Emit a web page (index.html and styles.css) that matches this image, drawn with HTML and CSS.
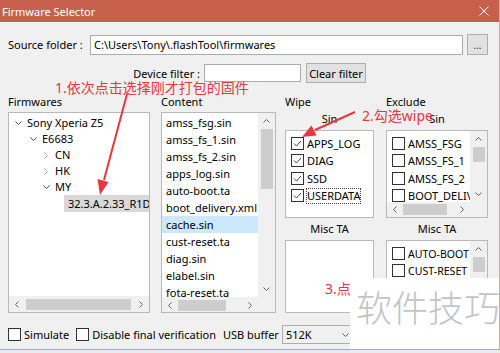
FILE: index.html
```html
<!DOCTYPE html>
<html lang="en">
<head>
  <meta charset="UTF-8" />
  <title>Firmware Selector</title>
  <link rel="stylesheet" href="styles.css">
</head>
<body>

<div class="window">
  <div class="titlebar">
    <span class="title">Firmware Selector</span>
    <svg class="close" width="10" height="10" viewBox="0 0 10 10"><path d="M0.5 0.5 L9.5 9.5 M9.5 0.5 L0.5 9.5" stroke="#fff" stroke-width="1"/></svg>
  </div>

  <div class="main">
    <div class="source-row">
      <label class="source-label">Source folder :</label>
      <div class="field source-field">C:\Users\Tony\.flashTool\firmwares</div>
      <button class="btn btn-dots">...</button>
    </div>

    <div class="filter-row">
      <label class="filter-label">Device filter :</label>
      <div class="field filter-field"></div>
      <button class="btn btn-clear">Clear filter</button>
    </div>

    <div class="panels">
      <!-- Firmwares tree -->
      <div class="col col-fw">
        <div class="cap">Firmwares</div>
        <div class="box box-tall">
          <div class="tree">
            <div class="node lvl0"><span class="chev open"><svg width="7" height="4"><polyline points="0.5,0.5 3.5,3.5 6.5,0.5" fill="none" stroke="#555"/></svg></span>Sony Xperia Z5</div>
            <div class="node lvl1"><span class="chev open"><svg width="7" height="4"><polyline points="0.5,0.5 3.5,3.5 6.5,0.5" fill="none" stroke="#555"/></svg></span>E6683</div>
            <div class="node lvl2"><span class="chev"><svg width="4" height="7"><polyline points="0.5,0.5 3.5,3.5 0.5,6.5" fill="none" stroke="#aaa"/></svg></span>CN</div>
            <div class="node lvl2"><span class="chev"><svg width="4" height="7"><polyline points="0.5,0.5 3.5,3.5 0.5,6.5" fill="none" stroke="#aaa"/></svg></span>HK</div>
            <div class="node lvl2"><span class="chev open"><svg width="7" height="4"><polyline points="0.5,0.5 3.5,3.5 6.5,0.5" fill="none" stroke="#555"/></svg></span>MY</div>
            <div class="node lvl3"><span class="leaf">32.3.A.2.33_R1D</span></div>
          </div>
          <div class="hscroll">
            <span class="arr"><svg width="4" height="7"><polyline points="3.5,0.5 0.5,3.5 3.5,6.5" fill="none" stroke="#606060"/></svg></span>
            <span class="track"><span class="thumb thumb-fw"></span></span>
            <span class="arr"><svg width="4" height="7"><polyline points="0.5,0.5 3.5,3.5 0.5,6.5" fill="none" stroke="#606060"/></svg></span>
          </div>
        </div>
      </div>

      <!-- Content list -->
      <div class="col col-content">
        <div class="cap">Content</div>
        <div class="box box-tall box-grid">
          <div class="list">
            <div class="item">amss_fsg.sin</div>
            <div class="item">amss_fs_1.sin</div>
            <div class="item">amss_fs_2.sin</div>
            <div class="item">apps_log.sin</div>
            <div class="item">auto-boot.ta</div>
            <div class="item">boot_delivery.xml</div>
            <div class="item selected">cache.sin</div>
            <div class="item">cust-reset.ta</div>
            <div class="item">diag.sin</div>
            <div class="item">elabel.sin</div>
            <div class="item">fota-reset.ta</div>
          </div>
          <div class="vscroll">
            <span class="arr"><svg width="7" height="4"><polyline points="0.5,3.5 3.5,0.5 6.5,3.5" fill="none" stroke="#606060"/></svg></span>
            <span class="track"><span class="thumb thumb-content"></span></span>
            <span class="arr"><svg width="7" height="4"><polyline points="0.5,0.5 3.5,3.5 6.5,0.5" fill="none" stroke="#606060"/></svg></span>
          </div>
          <div class="hscroll">
            <span class="arr"><svg width="4" height="7"><polyline points="3.5,0.5 0.5,3.5 3.5,6.5" fill="none" stroke="#606060"/></svg></span>
            <span class="track"><span class="thumb thumb-content-h"></span></span>
            <span class="arr"><svg width="4" height="7"><polyline points="0.5,0.5 3.5,3.5 0.5,6.5" fill="none" stroke="#606060"/></svg></span>
          </div>
          <div class="corner"></div>
        </div>
      </div>

      <!-- Wipe -->
      <div class="col col-wipe">
        <div class="cap">Wipe</div>
        <div class="sub">Sin</div>
        <div class="box box-sin">
          <div class="checks">
            <div class="check"><span class="cb"><svg width="11" height="11"><polyline points="2,5.5 4.5,8 9,3" fill="none" stroke="#444"/></svg></span>APPS_LOG</div>
            <div class="check"><span class="cb"><svg width="11" height="11"><polyline points="2,5.5 4.5,8 9,3" fill="none" stroke="#444"/></svg></span>DIAG</div>
            <div class="check"><span class="cb"><svg width="11" height="11"><polyline points="2,5.5 4.5,8 9,3" fill="none" stroke="#444"/></svg></span>SSD</div>
            <div class="check"><span class="cb"><svg width="11" height="11"><polyline points="2,5.5 4.5,8 9,3" fill="none" stroke="#444"/></svg></span><span class="focus">USERDATA</span></div>
          </div>
        </div>
        <div class="sub sub-misc">Misc TA</div>
        <div class="box box-misc"></div>
      </div>

      <!-- Exclude -->
      <div class="col col-exclude">
        <div class="cap">Exclude</div>
        <div class="sub">Sin</div>
        <div class="box box-sin box-grid">
          <div class="checks">
            <div class="check"><span class="cb"></span>AMSS_FSG</div>
            <div class="check"><span class="cb"></span>AMSS_FS_1</div>
            <div class="check"><span class="cb"></span>AMSS_FS_2</div>
            <div class="check"><span class="cb"></span>BOOT_DELIVERY</div>
          </div>
          <div class="vscroll">
            <span class="arr"><svg width="7" height="4"><polyline points="0.5,3.5 3.5,0.5 6.5,3.5" fill="none" stroke="#606060"/></svg></span>
            <span class="track"><span class="thumb thumb-ex"></span></span>
            <span class="arr"><svg width="7" height="4"><polyline points="0.5,0.5 3.5,3.5 6.5,0.5" fill="none" stroke="#606060"/></svg></span>
          </div>
          <div class="hscroll">
            <span class="arr"><svg width="4" height="7"><polyline points="3.5,0.5 0.5,3.5 3.5,6.5" fill="none" stroke="#606060"/></svg></span>
            <span class="track"><span class="thumb thumb-ex-h"></span></span>
            <span class="arr"><svg width="4" height="7"><polyline points="0.5,0.5 3.5,3.5 0.5,6.5" fill="none" stroke="#606060"/></svg></span>
          </div>
          <div class="corner"></div>
        </div>
        <div class="sub sub-misc">Misc TA</div>
        <div class="box box-misc box-grid">
          <div class="checks">
            <div class="check"><span class="cb"></span>AUTO-BOOT</div>
            <div class="check"><span class="cb"></span>CUST-RESET</div>
            <div class="check"><span class="cb"></span>DEVICE-KEY</div>
          </div>
          <div class="vscroll">
            <span class="arr"><svg width="7" height="4"><polyline points="0.5,3.5 3.5,0.5 6.5,3.5" fill="none" stroke="#606060"/></svg></span>
            <span class="track"><span class="thumb thumb-misc"></span></span>
            <span class="arr"><svg width="7" height="4"><polyline points="0.5,0.5 3.5,3.5 6.5,0.5" fill="none" stroke="#606060"/></svg></span>
          </div>
        </div>
      </div>
    </div>

    <div class="bottom-row">
      <label class="opt"><span class="cb"></span>Simulate</label>
      <label class="opt"><span class="cb"></span>Disable final verification</label>
      <span class="usb-label">USB buffer</span>
      <div class="select">512K<svg width="7" height="4"><polyline points="0.5,0.5 3.5,3.5 6.5,0.5" fill="none" stroke="#606060"/></svg></div>
    </div>
  </div>

  <!-- red annotations drawn over the dialog -->
  <div class="note note-1">1.依次点击选择刚才打包的固件</div>
  <div class="note note-2">2.勾选wipe</div>
  <div class="note note-3">3.点击flash</div>
  <svg class="arrows" width="500" height="353" viewBox="0 0 500 353">
    <line x1="127" y1="94" x2="104" y2="180" stroke="#e8383d" stroke-width="2"/>
    <polygon points="100,195 97.5,179 108.5,182" fill="#e8383d"/>
    <line x1="355" y1="112" x2="315" y2="130" stroke="#e8383d" stroke-width="2"/>
    <polygon points="302,137 311.5,125.5 316.5,135.5" fill="#e8383d"/>
  </svg>

  <div class="watermark">软件技巧</div>
</div>

</body>
</html>
```

FILE: styles.css
```css
body { margin: 0; background: #ebebeb; font-family: "Noto Sans", "Noto Sans CJK SC", sans-serif; font-size: 11px; color: #000; }

.window {
  position: relative;
  width: 500px; height: 350px;
  background: #f0f0f0;
  border-right: 1px solid #dca49a;
  border-bottom: 1px solid #d99a90;
  box-sizing: border-box;
  overflow: hidden;
}
.titlebar {
  height: 22px; background: #c8604e; color: #fff;
  display: flex; align-items: center; justify-content: space-between;
  padding: 0 10px 0 2px;
}
.title { font-size: 11px; }

.main { padding: 12px 11px 0 8px; }

.field {
  background: #fff; border: 1px solid #acacac; box-sizing: border-box;
  line-height: 18px; padding-left: 3px; white-space: nowrap; overflow: hidden;
}
.btn {
  font: inherit; background: #e1e1e1; border: 1px solid #adadad;
  padding: 0; color: #000; box-sizing: border-box; white-space: nowrap;
}

.source-row { display: flex; align-items: center; height: 21px; }
.source-label { width: 82px; }
.source-field { flex: 1; height: 20px; }
.btn-dots { width: 21px; height: 21px; margin-left: 4px; line-height: 14px; font-size: 10px; color: #333; }

.filter-row { display: flex; align-items: center; height: 20px; margin-top: 8px; }
.filter-label { width: 192px; text-align: right; padding-right: 4px; }
.filter-field { width: 97px; height: 18px; }
.btn-clear { width: 60px; height: 20px; margin-left: 5px; }

.panels { display: flex; margin-top: 11px; }
.col { display: flex; flex-direction: column; }
.col-fw { width: 142px; }
.col-content { width: 115px; margin-left: 11px; }
.col-wipe { width: 89px; margin-left: 9px; }
.col-exclude { width: 102px; margin-left: 12px; }

.cap { height: 18px; line-height: 15px; }
.sub { height: 18px; line-height: 14px; text-align: center; margin-top: -2px; padding-top: 2px; }
.sub-misc { height: 22px; line-height: 22px; margin-top: 0; padding-top: 0; }

.box { background: #fff; border: 1px solid #b9b9b9; box-sizing: border-box; overflow: hidden; }
.box-tall { height: 201px; display: flex; flex-direction: column; }
.box-sin { height: 88px; }
.box-misc { height: 73px; }
.box-grid { display: grid; grid-template-columns: 1fr 17px; grid-template-rows: 1fr 15px; }
.box-misc.box-grid { grid-template-rows: 1fr; }

/* tree */
.tree { flex: 1; padding-top: 2px; white-space: nowrap; }
.node { height: 16px; line-height: 16px; display: flex; align-items: center; }
.chev { width: 10px; display: flex; justify-content: center; align-items: center; margin-right: 4px; }
.chev svg { display: block; }
.lvl0 { padding-left: 4px; }
.lvl1 { padding-left: 19px; }
.lvl2 { padding-left: 32px; }
.lvl3 { padding-left: 55px; }
.leaf { background: #d9d9d9; padding: 0 4px; height: 17px; line-height: 17px; flex: 1; }

/* scrollbars */
.hscroll { height: 15px; background: #f0f0f0; display: flex; align-items: center; }
.hscroll .arr { width: 16px; display: flex; justify-content: center; }
.hscroll .track { flex: 1; height: 100%; display: flex; align-items: center; }
.hscroll .thumb { height: 11px; background: #cdcdcd; display: block; }
.box-tall .hscroll { height: 16px; }
.vscroll { background: #f0f0f0; display: flex; flex-direction: column; align-items: center; }
.vscroll .arr { height: 16px; display: flex; align-items: center; }
.vscroll .track { flex: 1; width: 100%; display: flex; justify-content: center; }
.vscroll .thumb { width: 12px; background: #cdcdcd; display: block; }
.corner { background: #f0f0f0; }
.box-grid .hscroll { grid-column: 1; }

.thumb-fw { width: 105px; margin-left: 1px; }
.thumb-content { height: 60px; }
.thumb-content-h { width: 48px; margin-left: 0; }
.thumb-ex { height: 15px; margin-top: 0; }
.thumb-ex-h { width: 44px; }
.thumb-misc { height: 15px; }

/* content list */
.list { padding-top: 1px; overflow: hidden; white-space: nowrap; }
.item { height: 17px; line-height: 17px; padding-left: 4px; }
.item.selected { background: #cce8ff; }

/* checkboxes */
.checks { padding: 4px 0 0 5px; white-space: nowrap; overflow: hidden; }
.check { height: 17.3px; display: flex; align-items: center; }
.cb {
  width: 11px; height: 11px; border: 1px solid #333; background: #fff;
  display: inline-block; margin-right: 3px; flex: none;
}
.cb svg { display: block; }
.focus { outline: 1px dotted #444; line-height: 14px; }
.box-misc .checks { font-size: 10.6px; }

/* bottom options */
.bottom-row { display: flex; align-items: center; height: 19px; margin-top: 12px; }
.opt { display: flex; align-items: center; margin-right: 7px; }
.opt .cb { margin-right: 3px; }
.usb-label { margin-right: 3px; }
.select {
  width: 72px; height: 19px; box-sizing: border-box;
  border: 1px solid #acacac; background: #f0f0f0;
  display: flex; align-items: center; justify-content: space-between;
  padding: 0 4px 0 3px;
}

/* annotations */
.note { position: absolute; color: #e8383d; font-size: 14px; line-height: 16px; font-family: "Noto Sans", "Noto Sans CJK SC", sans-serif; white-space: nowrap; }
.note-1 { left: 55px; top: 80px; }
.note-2 { left: 362px; top: 108px; }
.note-3 { left: 325px; top: 281px; }
.arrows { position: absolute; left: 0; top: 0; }
.close { display: block; }

.watermark {
  position: absolute; left: 350px; top: 278px; width: 150px; height: 75px;
  background: #fff; color: #c4c4c4;
  font-family: "Noto Sans CJK SC", sans-serif; font-weight: 300; font-size: 36px;
  line-height: 56px; padding-left: 6px; box-sizing: border-box; white-space: nowrap;
}
```
